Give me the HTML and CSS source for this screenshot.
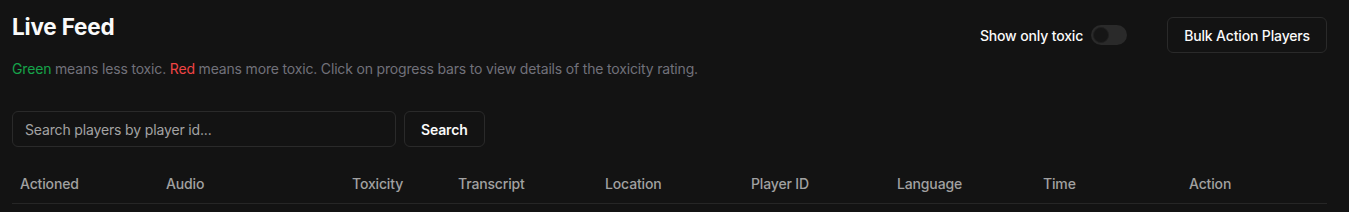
FILE: index.html
```html
<!DOCTYPE html>
<html lang="en">

<head>
  <meta charset="UTF-8" />
  <meta name="viewport" content="width=device-width, initial-scale=1.0" />
  <title>Live Feed</title>
  <link rel="stylesheet" href="styles.css">
</head>

<body>

  <main class="page">
    <header class="top">
      <div class="intro">
        <h1>Live Feed</h1>
        <p class="legend">
          <span class="green">Green</span> means less toxic.
          <span class="red">Red</span> means more toxic. Click on progress bars to view details of the toxicity rating.
        </p>
      </div>
      <div class="controls">
        <label class="toggle-label">Show only toxic</label>
        <button class="switch" aria-label="Show only toxic"><span class="knob"></span></button>
        <button class="btn bulk">Bulk Action Players</button>
      </div>
    </header>

    <form class="search">
      <input type="text" placeholder="Search players by player id...">
      <button type="button" class="btn search-btn">Search</button>
    </form>

    <table class="feed">
      <colgroup>
        <col style="width: 146px">
        <col style="width: 186px">
        <col style="width: 106px">
        <col style="width: 147px">
        <col style="width: 146px">
        <col style="width: 146px">
        <col style="width: 146px">
        <col style="width: 146px">
        <col>
      </colgroup>
      <thead>
        <tr>
          <th>Actioned</th>
          <th>Audio</th>
          <th>Toxicity</th>
          <th>Transcript</th>
          <th>Location</th>
          <th>Player ID</th>
          <th>Language</th>
          <th>Time</th>
          <th>Action</th>
        </tr>
      </thead>
    </table>
  </main>

</body>

</html>
```

FILE: styles.css
```css
body {
  margin: 0;
  padding: 0;
  background: #131313;
  color: #fafafa;
  font-family: Inter, "Noto Sans", sans-serif;
  letter-spacing: -0.15px;
}

.page {
  padding: 10px 22px 0 12px;
}

.top {
  display: flex;
  justify-content: space-between;
  align-items: flex-start;
}

h1 {
  margin: 0;
  font-size: 22.5px;
  line-height: 34px;
  font-weight: 700;
  letter-spacing: -0.2px;
}

.legend {
  margin: 15px 0 0;
  font-size: 14px;
  line-height: 20px;
  color: #71717a;
  letter-spacing: -0.17px;
}

.green {
  color: #16a34a;
}

.red {
  color: #ef4444;
}

.controls {
  display: flex;
  align-items: center;
  margin-top: 7px;
}

.toggle-label {
  font-size: 14px;
  font-weight: 500;
}

.switch {
  width: 36px;
  height: 20px;
  margin: 0 40px 0 8px;
  padding: 2px;
  border: none;
  border-radius: 10px;
  background: #2a2a2a;
  display: flex;
  align-items: center;
}

.knob {
  width: 16px;
  height: 16px;
  box-sizing: border-box;
  border-radius: 50%;
  background: #161616;
  border: 1px solid #1f1f1f;
}

.btn {
  height: 36px;
  padding: 0 16px;
  background: #131313;
  color: #fafafa;
  border: 1px solid #2a2a2a;
  border-radius: 6px;
  font-family: inherit;
  font-size: 14px;
  font-weight: 500;
  letter-spacing: -0.15px;
}

.search-btn {
  font-weight: 600;
}

.search {
  display: flex;
  gap: 8px;
  margin-top: 32px;
}

.search input {
  width: 384px;
  height: 36px;
  box-sizing: border-box;
  padding: 0 12px;
  background: transparent;
  border: 1px solid #2a2a2a;
  border-radius: 6px;
  color: #fafafa;
  font-family: inherit;
  font-size: 14px;
  letter-spacing: -0.15px;
}

.search input::placeholder {
  color: #a3a3a3;
}

.feed {
  width: 100%;
  margin-top: 16px;
  border-collapse: collapse;
  table-layout: fixed;
}

.feed th {
  height: 40px;
  padding: 0 8px;
  text-align: left;
  font-size: 14px;
  font-weight: 500;
  color: #a1a1a1;
  border-bottom: 1px solid #262626;
}
```
